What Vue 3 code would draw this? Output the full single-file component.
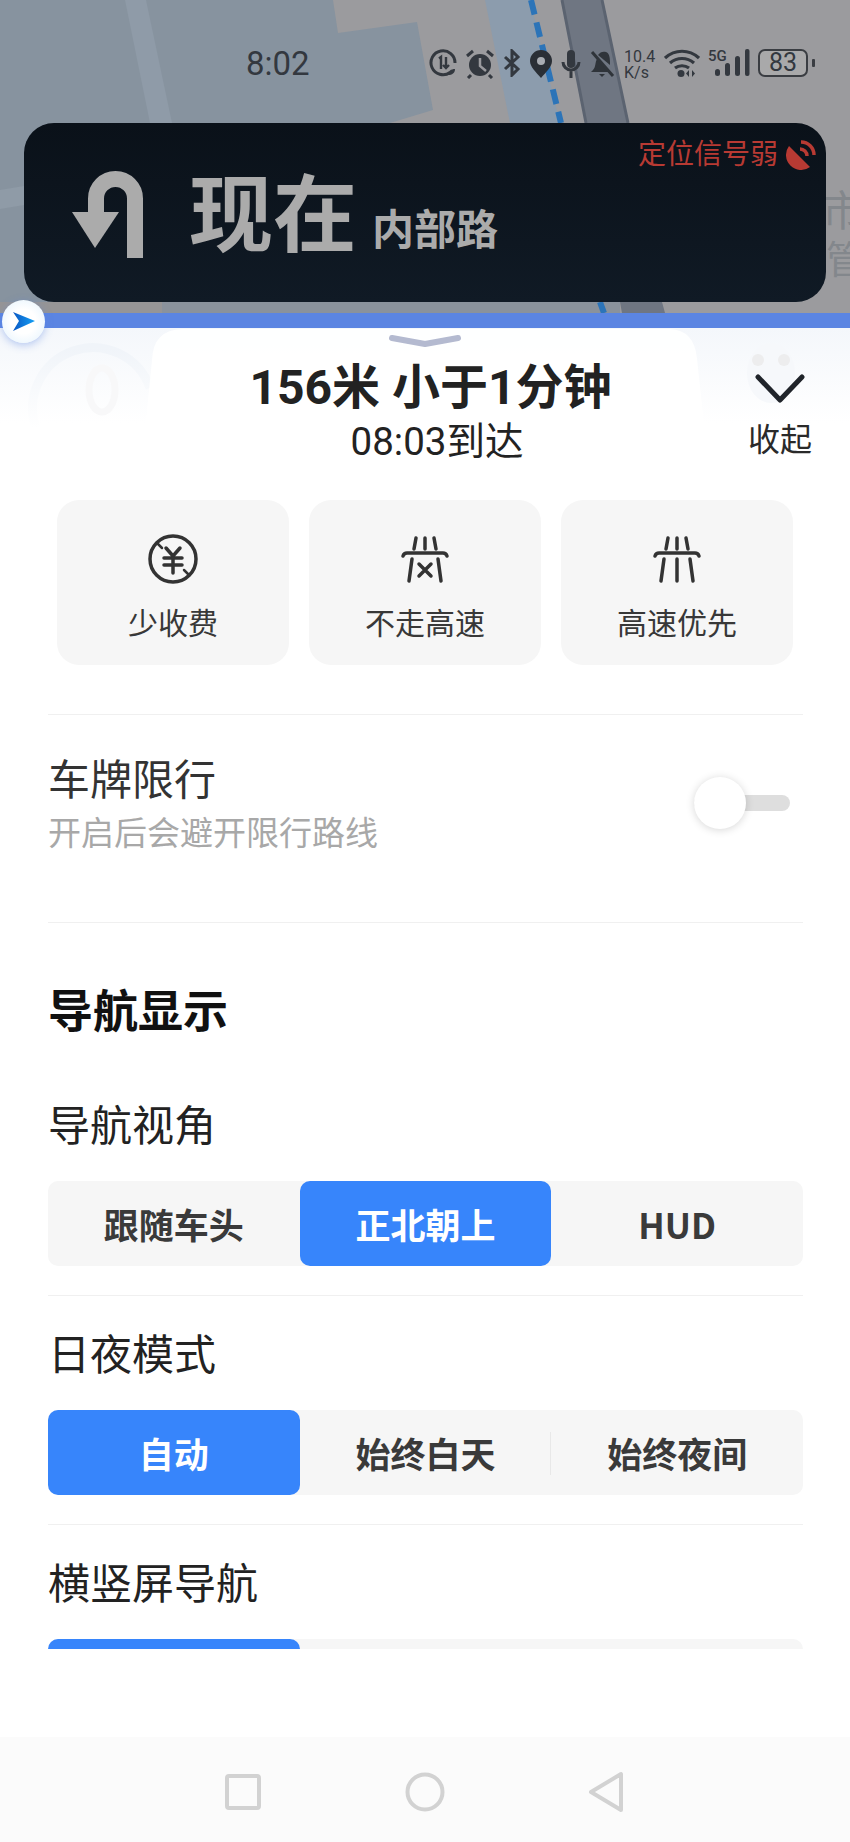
<script setup>
// static data for the route chips and the segmented settings
const chips = [
  { label: "少收费", icon: "yuan" },
  { label: "不走高速", icon: "noHighway" },
  { label: "高速优先", icon: "highway" },
];

const viewModes = [
  { label: "跟随车头" },
  { label: "正北朝上", active: true },
  { label: "HUD" },
];

const dayModes = [
  { label: "自动", active: true },
  { label: "始终白天", split: true },
  { label: "始终夜间" },
];
</script>

<template>
  <div class="phone">
    <div class="map">
      <svg class="map-art" width="850" height="313" viewBox="0 0 850 313">
        <rect width="850" height="313" fill="#9b9b9e" />
        <polygon points="0,0 333,0 338,33 417,22 433,110 390,123 390,302 0,302" fill="#87939f" />
        <polygon points="125,0 146,0 172,123 150,123" fill="#8f9ba8" />
        <polygon points="485,0 530,0 560,123 510,123" fill="#8c9cad" />
        <polygon points="0,190 24,186 24,205 0,209" fill="#8f9ba7" />
        <polygon points="562,0 602,0 628,123 586,123" fill="#6f7682" />
        <path d="M562 0 L586 123 M602 0 L628 123" stroke="#5b6370" stroke-width="3" fill="none" />
        <path d="M531 0 L561 123" stroke="#2c74b8" stroke-width="6" stroke-dasharray="15 8" fill="none" />
        <rect y="302" width="162" height="11" fill="#969596" />
        <rect x="162" y="302" width="458" height="11" fill="#8a929c" />
        <polygon points="620,302 662,302 665,313 622,313" fill="#6f7682" />
        <path d="M600 302 L604 313" stroke="#2c74b8" stroke-width="6" fill="none" />
        <rect x="665" y="302" width="185" height="11" fill="#9b9b9e" />
      </svg>
      <span class="map-label">市</span>
      <span class="map-label lower">岸管</span>

      <div class="status">
        <span class="time">8:02</span>
        <div class="status-icons">
          <svg width="28" height="28" viewBox="0 0 28 28" fill="none" stroke="#33383f" stroke-width="3">
            <path d="M21 23.500A12 12 0 1 1 26 14" />
            <path d="M10 9.500l2-1.500V20M17 8v11m-3-3l3 3 3-3" stroke-width="2.400" />
            <path d="M19 26c0-4 3-6 7-6 0 4-3 6-7 6z" fill="#33383f" stroke="none" />
          </svg>
          <svg width="30" height="30" viewBox="0 0 30 30" fill="#33383f">
            <circle cx="15" cy="16" r="11" />
            <path d="M15 9v8l6 5" stroke="#9a9a9e" stroke-width="2.500" fill="none" />
            <path d="M2 7l6-5M28 7l-6-5M6 26l-3 3M24 26l3 3" stroke="#33383f" stroke-width="3" fill="none" />
          </svg>
          <svg width="18" height="28" viewBox="0 0 18 28" fill="none" stroke="#33383f" stroke-width="3">
            <path d="M2 8l13 12-6 6V2l6 6L2 20" />
          </svg>
          <svg width="24" height="30" viewBox="0 0 24 30">
            <path d="M12 29C7 23 1 18 1 12a11 11 0 0 1 22 0c0 6-6 11-11 17z" fill="#2a2f36" />
            <circle cx="12" cy="12" r="4" fill="#a9adb3" />
          </svg>
          <svg width="20" height="30" viewBox="0 0 20 30" fill="none" stroke="#33383f" stroke-width="3">
            <rect x="6" y="1" width="8" height="18" rx="4" fill="#33383f" stroke="none" />
            <path d="M2 13a8 8 0 0 0 16 0M10 21v8" />
          </svg>
          <svg width="26" height="28" viewBox="0 0 26 28" fill="#2f343a">
            <path d="M4 21c3-3 2-8 4-11l12 13H2zM9 6c2-3 5-4 8-3 3 1 4 5 4 10v3z" />
            <path d="M10 25h6l-3 3z" />
            <path d="M3 3l21 24" stroke="#2f343a" stroke-width="3" />
          </svg>
          <div class="speed"><span>10.4</span><span>K/s</span></div>
          <svg width="36" height="28" viewBox="0 0 36 28" fill="none" stroke="#33383f" stroke-width="3.200">
            <path d="M1 9c10-9 24-9 34 0M6 14c7-6 17-6 24 0M11 19c4-3 10-3 14 0" />
            <circle cx="17" cy="24.500" r="3.500" fill="#33383f" stroke="none" />
            <path d="M25 21v7l-3-3.500zM28 21v7l3-3.500z" fill="#33383f" stroke="none" />
          </svg>
          <div class="signal">
            <span class="five-g">5G</span>
            <svg width="36" height="28" viewBox="0 0 36 28" fill="#33383f">
              <rect x="1" y="20" width="5" height="7" rx="2.500" />
              <rect x="11" y="14" width="5" height="13" rx="2.500" />
              <rect x="21" y="7" width="5" height="20" rx="2.500" />
              <rect x="31" y="0" width="4.500" height="27" rx="2" />
            </svg>
          </div>
          <div class="battery"><span>83</span></div>
          <span class="battery-cap"></span>
        </div>
      </div>

      <div class="guide-card">
        <div class="gps-row">
          <span>定位信号弱</span>
          <svg width="30" height="30" viewBox="0 0 30 30" fill="none" stroke="#b83a33" stroke-width="3.500">
            <path d="M3 6L24 27A15 15 0 0 1 3 6z" fill="#b83a33" stroke="none" />
            <path d="M14 9a7 7 0 0 1 7 7M15 2a13 13 0 0 1 13 13" />
          </svg>
        </div>
        <div class="guide-row">
          <svg class="turn" width="72" height="88" viewBox="0 0 72 88">
            <path d="M63 87V27.500A19.500 19.500 0 0 0 24 27.500V44" fill="none" stroke="#ababab" stroke-width="16" />
            <polygon points="0,41 47,41 23,77" fill="#ababab" />
          </svg>
          <span class="now">现在</span>
          <span class="road">内部路</span>
        </div>
      </div>
    </div>

    <div class="route-bar">
      <div class="locator">
        <svg width="26" height="24" viewBox="0 0 26 24">
          <defs>
            <linearGradient id="arrowFill" x1="0" y1="0" x2="1" y2="0">
              <stop offset="0" stop-color="#0b58c4" />
              <stop offset="1" stop-color="#14a0f5" />
            </linearGradient>
          </defs>
          <polygon points="2,2 24,11 2,21 8,11" fill="url(#arrowFill)" />
        </svg>
      </div>
    </div>

    <div class="sheet">
      <div class="summary">
        <svg class="ghost" width="850" height="170" viewBox="0 0 850 170" fill="none">
          <defs>
            <linearGradient id="ghostFade" x1="0" y1="0" x2="0" y2="1">
              <stop offset="0" stop-color="#f0f4f9" />
              <stop offset="1" stop-color="#ffffff" />
            </linearGradient>
          </defs>
          <path d="M36 100A58 58 0 0 1 150 60" stroke="url(#ghostFade)" stroke-width="9" />
          <ellipse cx="102" cy="62" rx="13" ry="22" stroke="#f8f8f9" stroke-width="7" />
          <ellipse cx="771" cy="45" rx="24" ry="30" fill="#f6f8fb" />
          <circle cx="758" cy="32" r="6" fill="#ededee" />
          <circle cx="784" cy="32" r="6" fill="#ededee" />
          <path d="M152 32Q153 2 182 1H670Q694 2 697 30L712 170H138Z" fill="#fff" fill-opacity="0.9" />
          <path d="M392 10L425 16L458 10" stroke="#b4bad0" stroke-width="6" stroke-linecap="round" stroke-linejoin="round" />
        </svg>
        <div class="summary-text">
          <div class="eta-title">156米 小于1分钟</div>
          <div class="eta-sub">08:03到达</div>
        </div>
        <div class="collapse">
          <svg width="50" height="30" viewBox="0 0 50 30" fill="none" stroke="#20242a" stroke-width="5" stroke-linecap="round" stroke-linejoin="round">
            <path d="M3 3L25 26L47 3" />
          </svg>
          <span>收起</span>
        </div>
      </div>

      <div class="chips">
        <div v-for="chip in chips" :key="chip.label" class="chip">
          <svg width="50" height="50" viewBox="0 0 50 50" fill="none" stroke="#333" stroke-width="3.500" stroke-linecap="round">
            <template v-if="chip.icon === 'yuan'">
              <circle cx="25" cy="25" r="23" />
              <path d="M18 14l7 8 7-8M16 24h18M16 31h18M25 22v17" />
              <path d="M9 9l5 5M36 36l5 5" stroke-width="2.500" />
            </template>
            <template v-else>
              <path d="M3 22q1-3 4-3h36q3 0 4 3" />
              <path d="M16 4l-2 11M25 4v11M34 4l2 11" />
              <path d="M12 25l-3 22M38 25l3 22" />
              <path v-if="chip.icon === 'highway'" d="M25 25v22" />
              <path v-else d="M19 30l12 12M31 30L19 42" />
            </template>
          </svg>
          <span>{{ chip.label }}</span>
        </div>
      </div>

      <div class="settings">
        <div class="plate-row">
          <div>
            <div class="row-title">车牌限行</div>
            <div class="row-sub">开启后会避开限行路线</div>
          </div>
          <div class="toggle"><span class="knob"></span></div>
        </div>

        <div class="group-title">导航显示</div>

        <div class="label first">导航视角</div>
        <div class="segments">
          <div v-for="m in viewModes" :key="m.label" class="seg" :class="{ active: m.active }">{{ m.label }}</div>
        </div>

        <div class="section">
          <div class="label">日夜模式</div>
          <div class="segments">
            <div v-for="m in dayModes" :key="m.label" class="seg" :class="{ active: m.active, split: m.split }">{{ m.label }}</div>
          </div>
        </div>

        <div class="section">
          <div class="label">横竖屏导航</div>
          <div class="segments">
            <div class="seg active"></div>
            <div class="seg"></div>
            <div class="seg"></div>
          </div>
        </div>
      </div>
    </div>

    <div class="nav-bar">
      <svg width="38" height="38" viewBox="0 0 38 38" fill="none" stroke="#d2d2d2" stroke-width="4" stroke-linejoin="round">
        <rect x="3" y="3" width="32" height="32" rx="2" />
      </svg>
      <svg width="40" height="40" viewBox="0 0 40 40" fill="none" stroke="#d2d2d2" stroke-width="4">
        <circle cx="20" cy="20" r="17.500" />
      </svg>
      <svg width="36" height="42" viewBox="0 0 36 42" fill="none" stroke="#d2d2d2" stroke-width="4" stroke-linejoin="round">
        <path d="M33 3V39L3 21Z" />
      </svg>
    </div>
  </div>
</template>

<style>
body {
  margin: 0;
  background: #fff;
}
</style>

<style scoped>
.phone {
  width: 850px;
  height: 1842px;
  display: flex;
  flex-direction: column;
  overflow: hidden;
  font-family: Roboto, "Noto Sans CJK SC", sans-serif;
  background: #fff;
  color: #222;
}

.map {
  position: relative;
  height: 313px;
  flex: none;
  overflow: hidden;
}

.map-art {
  position: absolute;
  left: 0;
  top: 0;
}

.map-label {
  position: absolute;
  left: 822px;
  top: 188px;
  font-size: 42px;
  line-height: 48px;
  color: #83878c;
  white-space: nowrap;
}

.map-label.lower {
  top: 236px;
  left: 788px;
  font-size: 38px;
}

.status {
  position: relative;
  height: 123px;
  display: flex;
  box-sizing: border-box;
  padding: 47px 0 0 246px;
}

.time {
  width: 183px;
  font-size: 33px;
  line-height: 34px;
  color: #33383f;
}

.status-icons {
  display: flex;
  align-items: flex-start;
  height: 34px;
  gap: 8px;
  padding-top: 2px;
}

.status-icons > svg {
  flex: none;
}

.speed {
  display: flex;
  flex-direction: column;
  width: 36px;
  margin-left: 1px;
  margin-right: -4px;
  font-size: 16px;
  line-height: 16px;
  color: #33383f;
}

.signal {
  position: relative;
  width: 42px;
  height: 28px;
  padding-left: 6px;
  box-sizing: border-box;
}

.five-g {
  position: absolute;
  left: 0;
  top: -1px;
  font-size: 15px;
  line-height: 16px;
  font-weight: 500;
  color: #33383f;
}

.battery {
  width: 50px;
  height: 28px;
  box-sizing: border-box;
  border: 2.500px solid #3a3d42;
  border-radius: 7px;
  background: #a9a9aa;
  text-align: center;
  font-size: 25px;
  line-height: 23px;
  color: #33383f;
}

.battery-cap {
  width: 3px;
  height: 8px;
  margin: 10px 0 0 -4px;
  background: #3a3d42;
  border-radius: 1px;
}

.guide-card {
  position: relative;
  margin: 0 24px;
  height: 179px;
  box-sizing: border-box;
  border-radius: 30px;
  padding: 16px 10px 0 48px;
  background: linear-gradient(#0a1119, #101a25);
}

.gps-row {
  display: flex;
  justify-content: flex-end;
  align-items: center;
  gap: 8px;
  height: 32px;
  font-size: 28px;
  line-height: 32px;
  color: #b83a33;
}

.guide-row {
  display: flex;
  align-items: flex-end;
  margin-top: 0;
  color: #ababab;
  font-weight: 700;
}

.turn {
  flex: none;
  margin-right: 45px;
}

.now {
  font-size: 84px;
  line-height: 84px;
  margin-top: -2px;
  margin-right: 15px;
}

.road {
  font-size: 42px;
  line-height: 48px;
  margin-bottom: 4px;
}

.route-bar {
  position: relative;
  z-index: 2;
  flex: none;
  height: 15px;
  background: #5b85e2;
}

.locator {
  position: absolute;
  left: 2px;
  top: -13px;
  width: 43px;
  height: 43px;
  border-radius: 50%;
  display: flex;
  align-items: center;
  justify-content: center;
  background: radial-gradient(circle, #ffffff 40%, #e2f2fd 100%);
  box-shadow: 0 2px 8px rgba(91, 133, 226, 0.45);
}

.sheet {
  flex: none;
  height: 1321px;
  overflow: hidden;
}

.summary {
  position: relative;
  height: 172px;
  display: flex;
  justify-content: center;
  background: linear-gradient(#f4f7fb, #fff 55%);
}

.ghost {
  position: absolute;
  left: 0;
  top: 0;
}

.summary-text {
  position: relative;
  width: 548px;
  box-sizing: border-box;
  padding-left: 24px;
  text-align: center;
}

.eta-title {
  margin-top: 32px;
  margin-right: 13px;
  font-size: 48px;
  line-height: 56px;
  font-weight: 700;
  color: #222;
}

.eta-sub {
  font-size: 38.500px;
  line-height: 52px;
  color: #222;
}

.collapse {
  position: absolute;
  left: 738px;
  top: 46px;
  width: 84px;
  display: flex;
  flex-direction: column;
  align-items: center;
  gap: 16px;
  font-size: 32px;
  line-height: 40px;
  color: #2a2a2a;
}

.chips {
  display: grid;
  grid-template-columns: repeat(3, 232px);
  gap: 20px;
  padding-left: 57px;
}

.chip {
  height: 165px;
  box-sizing: border-box;
  padding-top: 34px;
  border-radius: 22px;
  background: #f6f6f6;
  display: flex;
  flex-direction: column;
  align-items: center;
  gap: 18px;
  font-size: 30px;
  line-height: 44px;
  color: #383838;
}

.settings {
  margin: 49px 47px 0 48px;
  border-top: 1px solid #f0f0f0;
}

.plate-row {
  height: 208px;
  box-sizing: border-box;
  padding-top: 40px;
  display: flex;
  justify-content: space-between;
  border-bottom: 1px solid #f0f0f0;
}

.row-title {
  font-size: 42px;
  line-height: 52px;
  color: #333;
}

.row-sub {
  margin-top: 1px;
  font-size: 33px;
  line-height: 52px;
  color: #a8a8a8;
}

.toggle {
  position: relative;
  width: 96px;
  height: 16px;
  margin: 40px 13px 0 0;
  border-radius: 8px;
  background: #dedede;
}

.knob {
  position: absolute;
  left: 0;
  top: -18px;
  width: 52px;
  height: 52px;
  border-radius: 50%;
  background: #fff;
  box-shadow: 0 1px 8px rgba(0, 0, 0, 0.16);
}

.group-title {
  margin-top: 60px;
  font-size: 45px;
  line-height: 60px;
  font-weight: 700;
  color: #111;
}

.label {
  font-size: 42px;
  line-height: 56px;
  color: #222;
}

.label.first {
  margin-top: 56px;
}

.segments {
  display: grid;
  grid-template-columns: repeat(3, 1fr);
  height: 85px;
  margin-top: 26px;
  border-radius: 10px;
  background: #f6f6f6;
}

.seg {
  position: relative;
  display: flex;
  align-items: center;
  justify-content: center;
  border-radius: 10px;
  font-family: "Noto Sans CJK SC", sans-serif;
  font-size: 35px;
  font-weight: 700;
  color: #3a3a3a;
}

.seg.active {
  background: #3785fb;
  color: #fff;
}

.seg.split::after {
  content: "";
  position: absolute;
  right: 0;
  top: 22px;
  bottom: 20px;
  width: 1px;
  background: #e8e8e8;
}

.section {
  margin-top: 29px;
  padding-top: 32px;
  border-top: 1px solid #f0f0f0;
}

.nav-bar {
  flex: none;
  margin-top: auto;
  height: 105px;
  box-sizing: border-box;
  padding: 4px 0 0 224px;
  display: flex;
  align-items: center;
  gap: 143px;
  background: #fbfbfb;
}
</style>
